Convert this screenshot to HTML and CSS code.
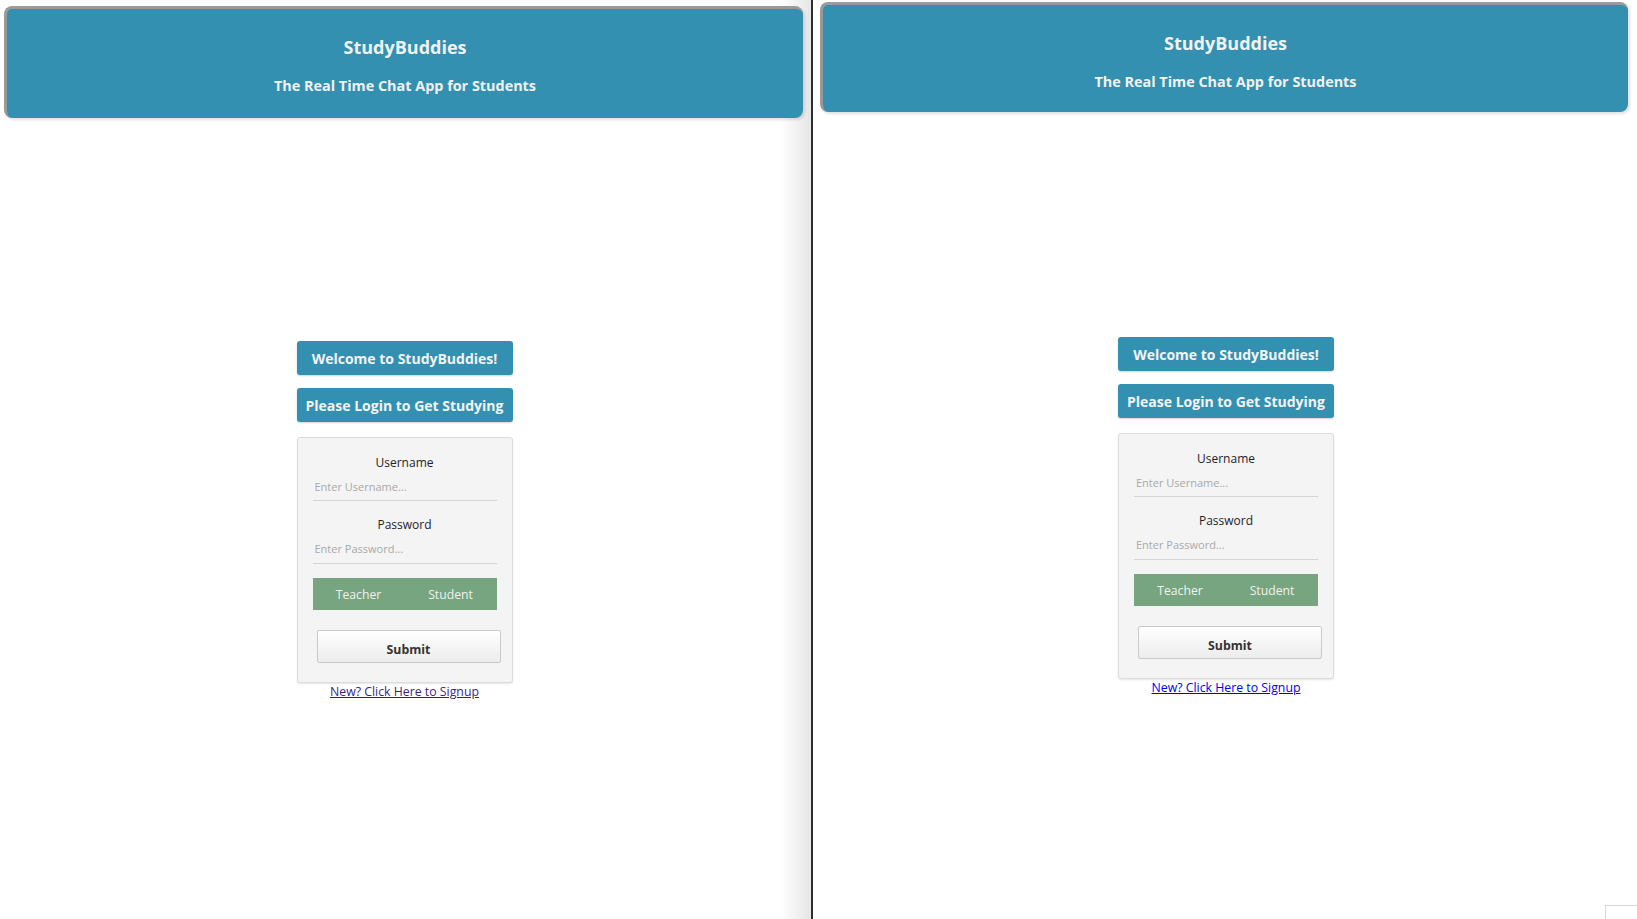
FILE: index.html
```html
<!DOCTYPE html>
<html>
<head>
<meta charset="utf-8">
<title>StudyBuddies</title>
<link rel="stylesheet" href="styles.css">
</head>
<body>
<div class="desktop">
  <div class="pane pane-left">
    <header class="app-header">
      <h3 class="app-title">StudyBuddies</h3>
      <h4 class="app-subtitle">The Real Time Chat App for Students</h4>
    </header>
    <main class="login">
      <div class="banner">Welcome to StudyBuddies!</div>
      <div class="banner">Please Login to Get Studying</div>
      <form class="login-box">
        <label class="field-label">Username</label>
        <input class="field-input" type="text" placeholder="Enter Username...">
        <label class="field-label">Password</label>
        <input class="field-input" type="password" placeholder="Enter Password...">
        <div class="role-toggle">
          <span class="role">Teacher</span>
          <span class="role">Student</span>
        </div>
        <button class="submit" type="button">Submit</button>
      </form>
      <a class="signup visited" href="#">New? Click Here to Signup</a>
    </main>
  </div>
  <div class="divider"></div>
  <div class="pane pane-right">
    <header class="app-header">
      <h3 class="app-title">StudyBuddies</h3>
      <h4 class="app-subtitle">The Real Time Chat App for Students</h4>
    </header>
    <main class="login">
      <div class="banner">Welcome to StudyBuddies!</div>
      <div class="banner">Please Login to Get Studying</div>
      <form class="login-box">
        <label class="field-label">Username</label>
        <input class="field-input" type="text" placeholder="Enter Username...">
        <label class="field-label">Password</label>
        <input class="field-input" type="password" placeholder="Enter Password...">
        <div class="role-toggle">
          <span class="role">Teacher</span>
          <span class="role">Student</span>
        </div>
        <button class="submit" type="button">Submit</button>
      </form>
      <a class="signup" href="#">New? Click Here to Signup</a>
    </main>
    <div class="corner-tip"></div>
  </div>
</div>
</body>
</html>
```

FILE: styles.css
```css
* { box-sizing: border-box; }
html, body {
  margin: 0;
  padding: 0;
  height: 100%;
  overflow: hidden;
  background: #fff;
  font-family: "Open Sans", "Noto Sans", sans-serif;
}
.desktop {
  display: flex;
  height: 919px;
}
.pane {
  display: flex;
  flex-direction: column;
  align-items: stretch;
}
.pane-left {
  width: 811px;
  flex: none;
  background: linear-gradient(to right, #ffffff calc(100% - 30px), #e6e6e6);
  padding: 6px 8px 0 4px;
}
.divider {
  width: 2px;
  flex: none;
  background: #2b302f;
}
.pane-right {
  flex: 1;
  position: relative;
  padding: 2px 9px 0 7px;
}
.app-header {
  background: #3390b1;
  border-style: solid;
  border-color: #9a9a9a;
  border-width: 3px 0 0 3px;
  border-radius: 8px;
  box-shadow: 2px 2px 3px rgba(0,0,0,0.12);
  display: flex;
  flex-direction: column;
  align-items: center;
  padding: 26px 0 22px;
  color: #f2f2f2;
}
.pane-right .app-header { padding: 26px 0 20px; }
.app-title {
  margin: 0;
  font-size: 18px;
  line-height: 24px;
  font-weight: 700;
}
.app-subtitle {
  margin: 17px 0 0;
  font-size: 14.4px;
  line-height: 20px;
  font-weight: 700;
}
.login {
  width: 216px;
  align-self: center;
  margin-top: 223px;
  margin-left: 2px;
  display: flex;
  flex-direction: column;
  align-items: stretch;
}
.pane-right .login { margin-top: 225px; margin-left: 4px; }
.banner {
  height: 34px;
  background: #3390b1;
  color: #f4f4f4;
  border-radius: 3px;
  box-shadow: 0 1px 2px rgba(0,0,0,0.18);
  font-weight: 700;
  font-size: 14px;
  display: flex;
  align-items: center;
  justify-content: center;
  white-space: nowrap;
}
.banner + .banner { margin-top: 13px; }
.login-box {
  margin: 15px 0 0;
  background: #f4f4f4;
  border: 1px solid #dcdcdc;
  border-radius: 3px;
  box-shadow: 0 1px 2px rgba(0,0,0,0.1);
  padding: 16px 15px 19px;
  display: flex;
  flex-direction: column;
}
.field-label {
  font-size: 12px;
  line-height: 18px;
  color: #1e1e2a;
  text-align: center;
}
.field-input {
  height: 29px;
  border: none;
  border-bottom: 1px solid #d4d4d4;
  background: transparent;
  padding: 0 2px;
  font-family: inherit;
  font-size: 11px;
  outline: none;
}
.field-input::placeholder { color: #a9a9a9; }
.field-input + .field-label { margin-top: 15px; }
.field-input + .field-label + .field-input { height: 30px; }
.role-toggle {
  margin-top: 14px;
  height: 32px;
  background: #76a57f;
  display: flex;
}
.role {
  flex: 1;
  display: flex;
  align-items: center;
  justify-content: center;
  color: #f2f2f2;
  font-size: 12.2px;
}
.submit {
  margin: 20px 0 0 4px;
  width: 184px;
  height: 33px;
  padding: 5px 0 0;
  border: 1px solid #cacaca;
  border-radius: 2px;
  background: linear-gradient(to bottom, #ffffff, #ececec);
  font-family: inherit;
  font-weight: 700;
  font-size: 12.3px;
  color: #333;
}
.signup {
  align-self: center;
  font-size: 12.3px;
  line-height: 18px;
  color: #0000ee;
}
.signup.visited { color: #3b1e86; }
.corner-tip {
  position: absolute;
  left: 792px;
  top: 905px;
  width: 60px;
  height: 30px;
  background: #fff;
  border: 1px solid #d6d6d6;
}
```
